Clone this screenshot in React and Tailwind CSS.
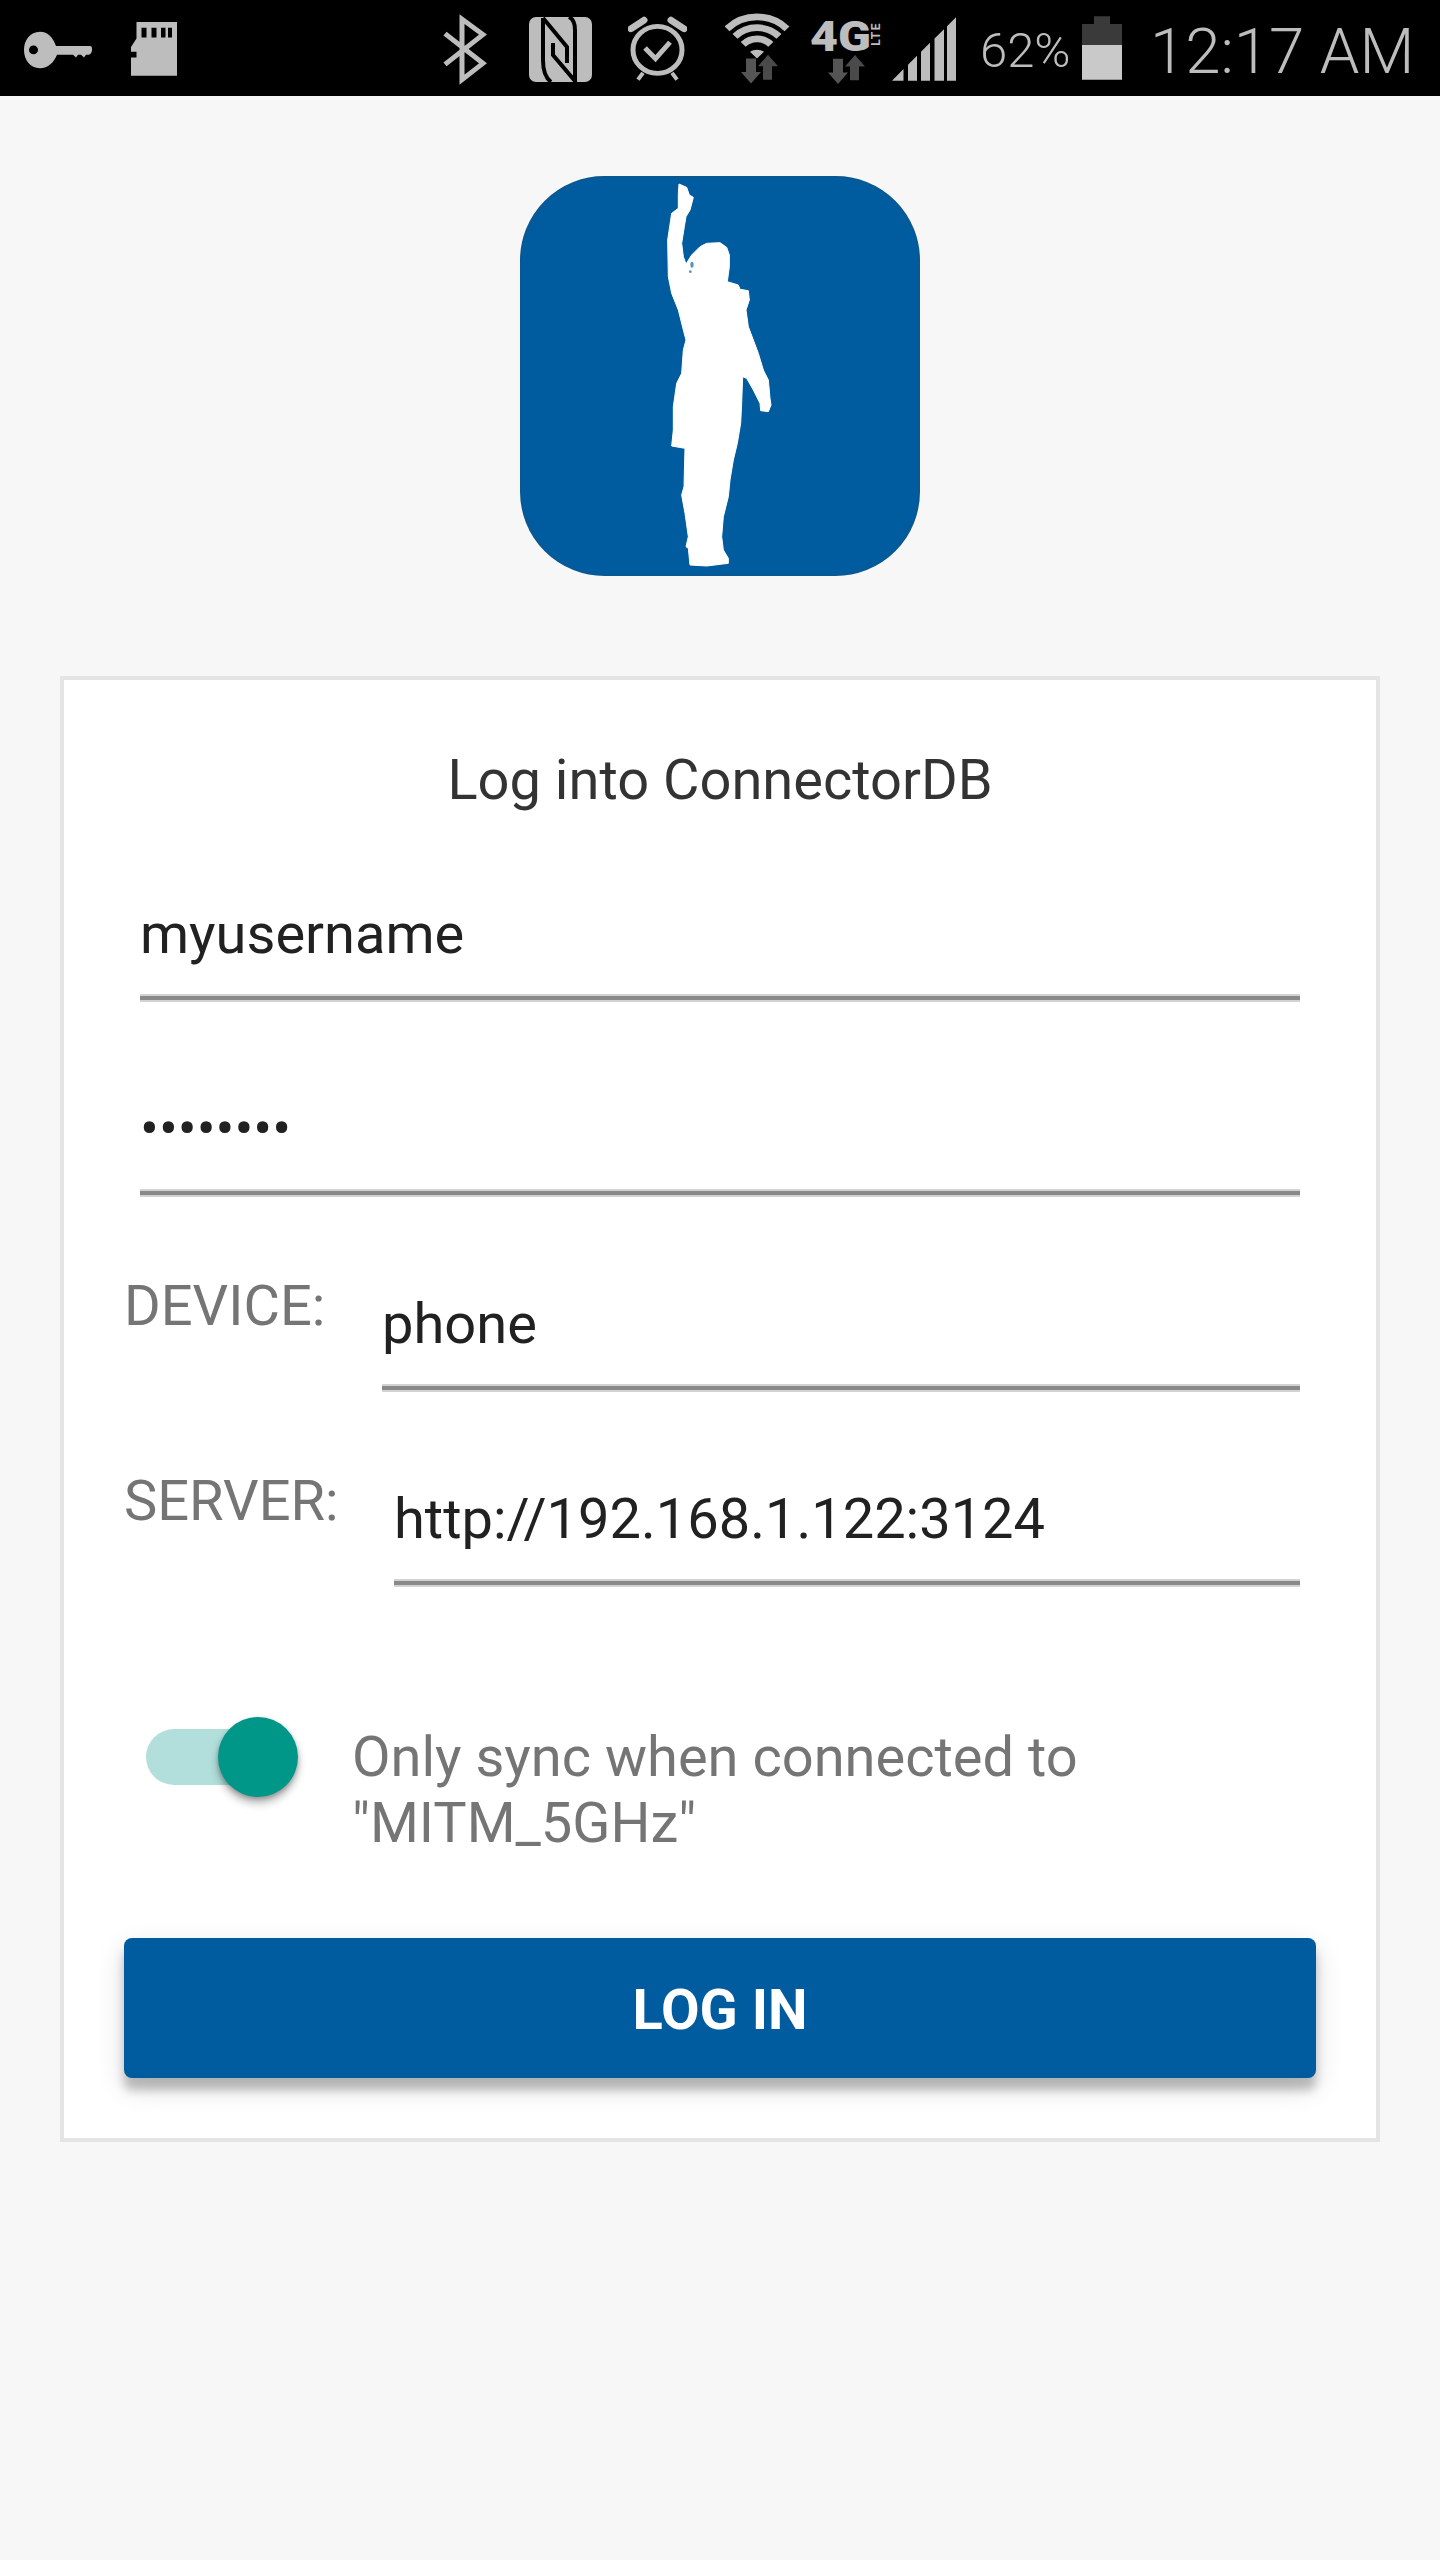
import React from 'react';

const GREY = '#bdbdbd';

function Arrows() {
  return (
    <>
      <path d="M5 4h10v14h5l-10 12L0 18h5z" fill="#555555" />
      <path d="M22 26V12h-5L27 0l10 12h-6v14z" fill="#4a4a4a" />
    </>
  );
}

// status icons are drawn on a 100 tall grid and squeezed into the 96px bar
function Glyph({ w, className = '', children }) {
  return (
    <svg width={w} height="96" viewBox={`0 0 ${w} 100`} preserveAspectRatio="none" className={`shrink-0 ${className}`}>
      {children}
    </svg>
  );
}

function KeyIcon() {
  return (
    <Glyph w={68}>
      <path d="M16 33c8 0 13 6 16 15h34c2 0 2 2 2 4s-1 4-3 5h-3l-2 3-3-3h-3l-2 3-3-3H33c-3 8-9 14-17 14C6 71 0 62 0 52s6-19 16-19z" fill={GREY} />
      <circle cx="9.5" cy="52" r="4.5" fill="#000" />
    </Glyph>
  );
}

function SdIcon() {
  return (
    <Glyph w={46} className="ml-[39px]">
      <path d="M5.5 23H46v56H0V60h5.5v-6H0v-5l5.5-9z" fill={GREY} />
      <path d="M10.5 29h5v10h-5zM20.5 29h5v10h-5zM30 29h4.500v10H30zM37 29h4v10h-4z" fill="#000" />
    </Glyph>
  );
}

function BluetoothIcon() {
  return (
    <Glyph w={44} className="ml-[266px]">
      <path d="M2 35l38 31-21 17V20l21 16L2 67" fill="none" stroke={GREY} strokeWidth="5" />
    </Glyph>
  );
}

function NfcIcon() {
  return (
    <svg width="63" height="96" viewBox="0 0 63 96" className="ml-[42px] shrink-0">
      <rect x="0" y="17" width="63" height="65" rx="7" fill={GREY} />
      <path d="M14 18V60Q14 76 22 82M14 18L38 47V63M24 43V55L46 81V30Q46 20 40 17" fill="none" stroke="#000" strokeWidth="4" />
    </svg>
  );
}

function AlarmIcon() {
  return (
    <Glyph w={59} className="ml-[36px]">
      <circle cx="29.500" cy="52" r="24.500" fill="none" stroke={GREY} strokeWidth="5" />
      <path d="M3 30l13-9M43 21l13 9" fill="none" stroke={GREY} strokeWidth="7" strokeLinecap="round" />
      <path d="M17 50l10.500 11L42 44" fill="none" stroke={GREY} strokeWidth="5" />
      <path d="M15 76l-5 7M44 76l5 7" fill="none" stroke={GREY} strokeWidth="4" />
    </Glyph>
  );
}

function WifiIcon() {
  return (
    <Glyph w={65} className="ml-[38px]">
      <path d="M2 30a42.500 42.500 0 0 1 60 0M10 38a31 31 0 0 1 44 0M18.200 46.200a19.500 19.500 0 0 1 27.600 0" fill="none" stroke={GREY} strokeWidth="7" />
      <path d="M25 54c4-3 10-3 14 0l-7 7z" fill={GREY} />
      <g transform="translate(16 57)"><Arrows /></g>
    </Glyph>
  );
}

function LteIcon() {
  return (
    <div className="relative ml-[20px] h-[96px] w-[72px] shrink-0">
      <span className="absolute left-[0px] top-[11px] origin-left scale-x-[1.15] text-[42px] font-black leading-[52px] text-[#bdbdbd]">4G</span>
      <span className="absolute left-[61px] top-[22px] rotate-180 text-[12px] font-bold leading-[11px] tracking-[1.5px] text-[#bdbdbd] [writing-mode:vertical-rl]">LTE</span>
      <svg width="38" height="29" viewBox="0 0 38 30" preserveAspectRatio="none" className="absolute left-[18px] top-[55px]">
        <Arrows />
      </svg>
    </div>
  );
}

function SignalIcon() {
  return (
    <Glyph w={64} className="ml-[10px]">
      <path d="M0 84l11.500-12v12zM16 67.500l9-9.300V84h-9zM29 54l9-9.400V84h-9zM42.500 40.200L52 30.400V84h-9.500zM55 27.300L64 18v66h-9z" fill={GREY} />
    </Glyph>
  );
}

function BatteryIcon() {
  return (
    <Glyph w={40}>
      <path d="M12 17h16v8h12v22H0V25h12z" fill="#3a3a3a" />
      <path d="M0 47h40v36H0z" fill="#c9c9c9" />
    </Glyph>
  );
}

function StatusBar() {
  return (
    <div className="flex h-[96px] items-start bg-black pl-[24px] text-[#bdbdbd]">
      <KeyIcon />
      <SdIcon />
      <BluetoothIcon />
      <NfcIcon />
      <AlarmIcon />
      <WifiIcon />
      <LteIcon />
      <SignalIcon />
      <div className="ml-[24px] w-[102px] shrink-0 text-[49px] font-light leading-[101px]">62%</div>
      <BatteryIcon />
      <div className="ml-[28px] shrink-0 text-[63.5px] font-light leading-[103px]">12:17 AM</div>
    </div>
  );
}

function Logo() {
  return (
    <svg width="400" height="400" viewBox="60 48 1200 1200" className="mx-auto mt-[80px] block">
      <rect x="63" y="51" width="1194" height="1194" rx="250" fill="#005c9f" stroke="#0a5891" strokeWidth="6" />
      <path
        d="M537 72L560 82L568 105L580 112L570 150L558 170L553 200L545 250L550 290L558 312L575 285L600 260L620 250L660 248L680 262L688 285L688 320L682 365L715 375L720 388L745 392L748 420L738 450L745 500L760 540L775 580L790 630L805 660L810 715L813 735L805 755L782 752L780 730L760 690L740 655L728 650L725 730L722 790L712 850L700 900L690 960L685 1010L670 1070L665 1130L670 1170L685 1195L685 1210L620 1218L570 1215L565 1165L558 1160L565 1130L555 1060L545 1005L552 980L555 865L515 858L520 810L520 740L530 670L545 640L550 570L558 540L550 510L535 450L515 400L505 350L503 240L515 160L535 145L535 100Z"
        fill="#fff"
        stroke="#fff"
        strokeWidth="3"
        strokeLinejoin="round"
      />
      <ellipse cx="576" cy="314" rx="5" ry="9" fill="#5a93c0" />
      <circle cx="571" cy="335" r="4" fill="#5a93c0" />
    </svg>
  );
}

function Field({ children, className = '' }) {
  return (
    <div className={`flex h-[98px] flex-col text-[56px] leading-[64px] text-[#212121] ${className}`}>
      {children}
      <div className="mt-auto h-[4px] bg-[#898989] shadow-[0_2px_0_#d2d2d2,0_-2px_0_#d2d2d2]" />
    </div>
  );
}

function LabeledField({ label, labelWidth, value, className = '' }) {
  return (
    <div className={`flex items-start pr-[16px] ${className}`}>
      <div className={`shrink-0 text-[56px] leading-[64px] text-[#757575] ${labelWidth}`}>{label}</div>
      <Field className="mt-[18px] flex-1">{value}</Field>
    </div>
  );
}

export default function App() {
  return (
    <div className="min-h-[2560px] bg-[#f7f7f7] font-['Roboto',sans-serif]">
      <StatusBar />
      <Logo />

      {/* Login card */}
      <div className="mx-[60px] mt-[100px] border-[4px] border-[#e4e4e4] bg-white px-[60px] pb-[60px] pt-[68px]">
        <div className="text-center text-[56px] leading-[64px] text-[#333333]">Log into ConnectorDB</div>

        <div className="mx-[16px] mt-[90px]">
          <Field>myusername</Field>
          <Field className="mt-[97px]">••••••••</Field>
        </div>

        <LabeledField className="mt-[79px]" label="DEVICE:" labelWidth="w-[258px]" value="phone" />
        <LabeledField className="mt-[79px]" label="SERVER:" labelWidth="w-[270px]" value="http://192.168.1.122:3124" />

        <div className="mt-[132px] flex items-start pl-[22px]">
          <div className="relative flex h-[80px] w-[152px] shrink-0 items-center">
            <div className="h-[56px] w-[136px] rounded-full bg-[#b2dfdb]" />
            <div className="absolute right-0 top-0 h-[80px] w-[80px] rounded-full bg-[#009688] shadow-[0_6px_8px_rgba(0,0,0,0.3),0_2px_4px_rgba(0,0,0,0.2)]" />
          </div>
          <div className="ml-[54px] mt-[7px] text-[56px] leading-[66px] text-[#757575]">
            Only sync when connected to
            <br />
            "MITM_5GHz"
          </div>
        </div>

        <button className="mt-[82px] flex h-[140px] w-full items-center justify-center rounded-[8px] bg-[#005c9f] pt-[4px] text-[56px] font-bold text-white shadow-[0_12px_10px_rgba(0,0,0,0.22),0_10px_28px_rgba(0,0,0,0.14)]">
          LOG IN
        </button>
      </div>
    </div>
  );
}
